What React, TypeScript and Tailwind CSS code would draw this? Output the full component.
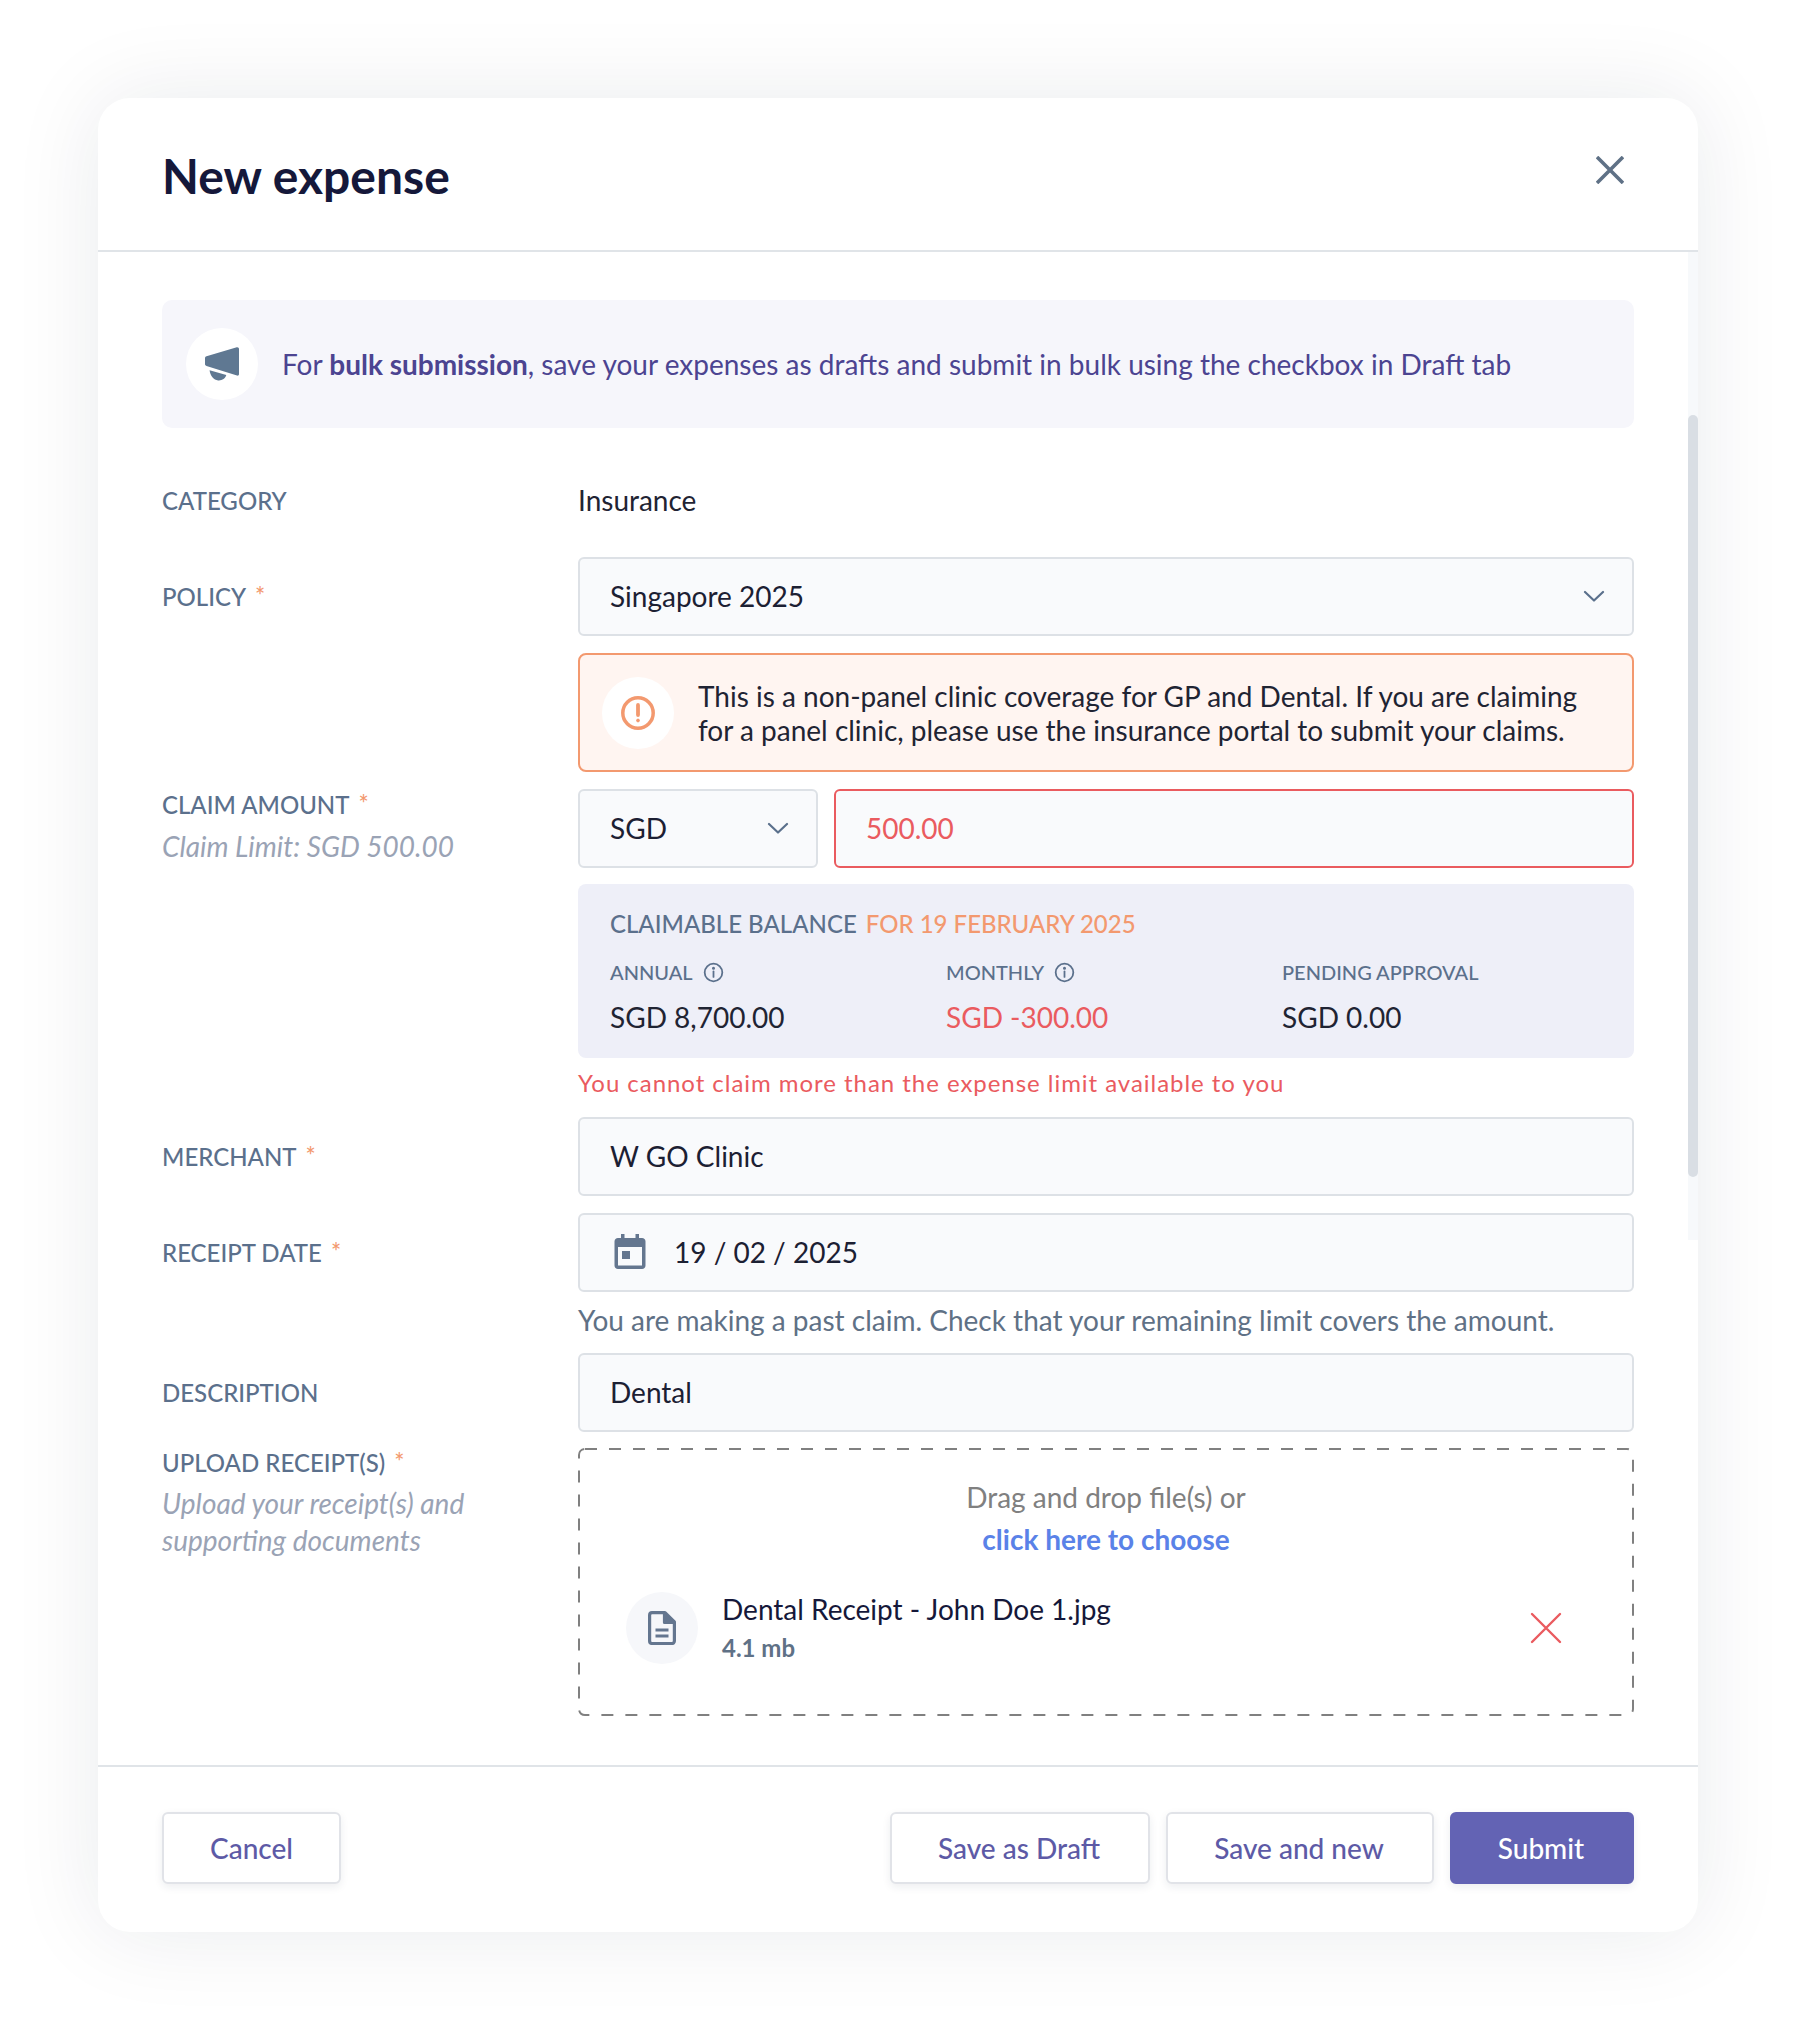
import React from "react";

const Star = () => <span className="ml-[9px] text-[24px] leading-[20px] text-[#f3996f] relative top-[-1px]">*</span>;

const labelCls = "text-[24px] leading-[32px] text-[#5b708c] font-medium";
const subCls = "text-[28px] leading-[37px] italic text-[#9aa3b5]";

function Row({ label, req, sub, children, cls = "" }: { label?: string; req?: boolean; sub?: React.ReactNode; children: React.ReactNode; cls?: string }) {
  return (
    <div className={`flex items-start ${cls}`}>
      <div className="w-[416px] shrink-0">
        {label && (
          <div className="h-[79px] flex flex-col justify-center">
            <div className={labelCls}>
              {label}
              {req && <Star />}
            </div>
          </div>
        )}
        {sub}
      </div>
      <div className="w-[1056px] min-w-0">{children}</div>
    </div>
  );
}

const Field = ({ children, cls = "" }: { children: React.ReactNode; cls?: string }) => (
  <div className={`h-[79px] pb-[2px] flex items-center rounded-[6px] border-2 border-[#dde1e6] bg-[#f9fafc] px-[30px] text-[28px] text-[#1c2033] ${cls}`}>{children}</div>
);

const Chevron = () => (
  <svg width="22" height="12" viewBox="0 0 22 12" fill="none" stroke="#5b708c" strokeWidth="2.2" strokeLinecap="round" strokeLinejoin="round">
    <path d="M2 2l9 8.5L20 2" />
  </svg>
);

const Info = () => (
  <svg width="21" height="21" viewBox="0 0 20 20" fill="none" stroke="#5b708c" strokeWidth="1.7" className="ml-[10px]">
    <circle cx="10" cy="10" r="8.4" />
    <path d="M10 9v5.2" strokeLinecap="round" />
    <circle cx="10" cy="6" r="0.6" fill="#5b708c" />
  </svg>
);

const Button = ({ children, cls = "" }: { children: React.ReactNode; cls?: string }) => (
  <button className={`h-[72px] rounded-[6px] border-2 border-[#e1e3e8] bg-white pr-[2px] text-[28px] font-medium text-[#5d5aa6] shadow-[0_3px_8px_rgba(30,40,70,0.08)] ${cls}`}>{children}</button>
);

export default function App() {
  return (
    <div className="min-h-[2034px] bg-white pt-[98px] pl-[98px] [font-family:Lato,'Noto_Sans',sans-serif]">
      <div className="w-[1600px] h-[1834px] rounded-[32px] bg-white shadow-[0_0_90px_rgba(20,30,50,0.09)] flex flex-col overflow-hidden relative">
        {/* header */}
        <div className="h-[154px] shrink-0 border-b-2 border-[#e0e4e8] pl-[64px] pr-[74px] flex items-start justify-between">
          <h1 className="mt-[48px] text-[48px] leading-[60px] font-bold text-[#15183a]">New expense</h1>
          <svg width="28" height="28" viewBox="0 0 28 28" fill="none" stroke="#5f7186" strokeWidth="3.6" className="mt-[58px]">
            <path d="M1 1l26 26M27 1L1 27" />
          </svg>
        </div>

        {/* body */}
        <div className="flex-1 relative px-[64px] pt-[48px]">
          <div className="absolute right-0 top-0 bottom-[525px] w-[10px] bg-[#f7f9fb]" />
          <div className="absolute right-0 top-[163px] h-[762px] w-[10px] rounded-[6px] bg-[#d9dee4]" />

          <div className="h-[128px] rounded-[10px] bg-[#f6f6fb] flex items-center pl-[24px]">
            <div className="w-[72px] h-[72px] rounded-full bg-white flex items-center justify-center shrink-0">
              <svg width="34" height="34" viewBox="0 0 34 34" fill="#5f7892">
                <path d="M1.500 9.300 31.800.3C33 0 34 .8 34 2v25c0 1.200-.8 1.900-2 1.600L1.500 18.900C.5 18.600 0 18 0 17v-5.700C0 10.300.5 9.600 1.500 9.300Z" />
                <path d="M4.600 23.300 21.300 28c-1 3.500-4.400 5.800-8.200 5.400-4.300-.4-8-4.600-8.500-10.100Z" />
              </svg>
            </div>
            <div className="ml-[24px] text-[28px] text-[#4c4491]">
              For <span className="font-bold">bulk submission</span>, save your expenses as drafts and submit in bulk using the checkbox in Draft tab
            </div>
          </div>

          <div className="mt-[40px] flex items-center h-[65px]">
            <div className={`w-[416px] ${labelCls}`}>CATEGORY</div>
            <div className="pb-[2px] text-[28px] text-[#1f2433]">Insurance</div>
          </div>

          <Row cls="mt-[24px]" label="POLICY" req>
            <Field cls="justify-between pr-[27px]">
              <span>Singapore 2025</span>
              <Chevron />
            </Field>
            <div className="mt-[17px] h-[119px] rounded-[8px] border-2 border-[#f3996f] bg-[#fff5f1] flex items-center pl-[22px]">
              <div className="w-[72px] h-[72px] rounded-full bg-white flex items-center justify-center shrink-0">
                <svg width="36" height="36" viewBox="0 0 36 36" fill="none" stroke="#f3996f" strokeWidth="3.5">
                  <circle cx="18" cy="18" r="15.200" />
                  <path d="M18 10v10" strokeLinecap="round" strokeWidth="3.800" />
                  <circle cx="18" cy="25.500" r="1.400" fill="#f3996f" strokeWidth="1" />
                </svg>
              </div>
              <div className="ml-[24px] text-[28px] leading-[34px] text-[#1f2433]">
                This is a non-panel clinic coverage for GP and Dental. If you are claiming
                <br />
                for a panel clinic, please use the insurance portal to submit your claims.
              </div>
            </div>
          </Row>

          <Row
            cls="mt-[17px]"
            sub={
              <div>
                <div className={labelCls}>
                  CLAIM AMOUNT
                  <Star />
                </div>
                <div className={`mt-[7px] ${subCls}`}>Claim Limit: SGD 500.00</div>
              </div>
            }
          >
            <div className="flex gap-[16px]">
              <Field cls="w-[240px] justify-between pr-[27px] shrink-0">
                <span>SGD</span>
                <Chevron />
              </Field>
              <Field cls="flex-1 !border-[#ea5b5f] !text-[#ea5b5f]">500.00</Field>
            </div>
            <div className="mt-[16px] h-[174px] rounded-[8px] bg-[#eeeff8] px-[32px] pt-[24px]">
              <div className="text-[24px] leading-[32px] font-medium text-[#5b708c]">
                CLAIMABLE BALANCE <span className="ml-[3px] text-[#f3996f]">FOR 19 FEBRUARY 2025</span>
              </div>
              <div className="mt-[18px] flex">
                {[
                  { t: "ANNUAL", i: true, v: "SGD 8,700.00", c: "text-[#1f2433]" },
                  { t: "MONTHLY", i: true, v: "SGD -300.00", c: "text-[#ea5b5f]" },
                  { t: "PENDING APPROVAL", i: false, v: "SGD 0.00", c: "text-[#1f2433]" },
                ].map((b) => (
                  <div key={b.t} className="w-[336px] shrink-0">
                    <div className="flex items-center h-[28px] text-[20px] font-medium text-[#5b708c]">
                      {b.t}
                      {b.i && <Info />}
                    </div>
                    <div className={`mt-[13px] text-[28px] leading-[36px] ${b.c}`}>{b.v}</div>
                  </div>
                ))}
              </div>
            </div>
            <div className="mt-[9px] h-[33px] text-[24px] leading-[32px] tracking-[0.96px] text-[#ea5b5f]">You cannot claim more than the expense limit available to you</div>
          </Row>

          <Row cls="mt-[17px]" label="MERCHANT" req>
            <Field>W GO Clinic</Field>
          </Row>

          <Row cls="mt-[17px]" label="RECEIPT DATE" req>
            <Field>
              <svg width="32" height="35" viewBox="0 0 32 35" className="ml-[4px] mr-[28px] shrink-0">
                <path d="M7 0h3.500v4h11V0H25v4h3c2 0 3.500 1.500 3.500 3.500v24c0 2-1.500 3.500-3.500 3.500H4c-2 0-3.500-1.500-3.500-3.500v-24C.5 5.500 2 4 4 4h3ZM4 13v18.500h24V13Z" fill="#64768f" fillRule="evenodd" />
                <rect x="8" y="17" width="8" height="8" fill="#64768f" />
              </svg>
              19 / 02 / 2025
            </Field>
            <div className="mt-[8px] h-[44px] text-[28px] leading-[40px] text-[#5f7186]">You are making a past claim. Check that your remaining limit covers the amount.</div>
          </Row>

          <Row cls="mt-[9px]" label="DESCRIPTION">
            <Field>Dental</Field>
          </Row>

          <Row
            cls="mt-[16px]"
            sub={
              <div className="-mt-[1px]">
                <div className={labelCls}>
                  UPLOAD RECEIPT(S)
                  <Star />
                </div>
                <div className={`mt-[6px] ${subCls}`}>
                  Upload your receipt(s) and
                  <br />
                  supporting documents
                </div>
              </div>
            }
          >
            <div className="relative h-[268px]">
              <svg className="absolute inset-0" width="1056" height="268" fill="none">
                <rect x="1" y="1" width="1054" height="266" rx="6" stroke="#808080" strokeWidth="2" strokeDasharray="12 12" />
              </svg>
              <div className="pt-[28px] text-center text-[28px] leading-[42px]">
                <div className="text-[#808080]">Drag and drop file(s) or</div>
                <div className="font-bold text-[#5a82e8]">click here to choose</div>
              </div>
              <div className="mt-[30px] ml-[48px] mr-[72px] flex items-center">
                <div className="w-[72px] h-[72px] rounded-full bg-[#f6f7fa] flex items-center justify-center shrink-0">
                  <svg width="28" height="34" viewBox="0 0 28 34" fill="none" stroke="#64768f" strokeWidth="3.200" strokeLinejoin="round">
                    <path d="M4 1.600h13l9.400 9.400v19a2.500 2.500 0 0 1-2.500 2.500H4A2.500 2.500 0 0 1 1.600 30V4A2.500 2.500 0 0 1 4 1.600Z" />
                    <path d="M16.500 2v9.500H26" fill="#64768f" />
                    <path d="M7.500 19h13M7.500 25h13" />
                  </svg>
                </div>
                <div className="ml-[24px] flex-1">
                  <div className="text-[28px] leading-[38px] text-[#15183a]">Dental Receipt - John Doe 1.jpg</div>
                  <div className="mt-[2px] text-[24px] leading-[36px] font-bold text-[#5f7186]">4.1 mb</div>
                </div>
                <svg width="32" height="32" viewBox="0 0 32 32" stroke="#ea5b5f" strokeWidth="2.400" strokeLinecap="round">
                  <path d="M2 2l28 28M30 2L2 30" />
                </svg>
              </div>
            </div>
          </Row>
        </div>

        {/* footer */}
        <div className="h-[167px] shrink-0 border-t-2 border-[#e0e4e8] px-[64px] pt-[45px] flex items-start">
          <Button cls="w-[179px] !pr-0">Cancel</Button>
          <div className="ml-auto flex gap-[16px]">
            <Button cls="w-[260px]">Save as Draft</Button>
            <Button cls="w-[268px]">Save and new</Button>
            <Button cls="w-[184px] !border-[#6363b4] !bg-[#6363b4] !text-white">Submit</Button>
          </div>
        </div>
      </div>
    </div>
  );
}
